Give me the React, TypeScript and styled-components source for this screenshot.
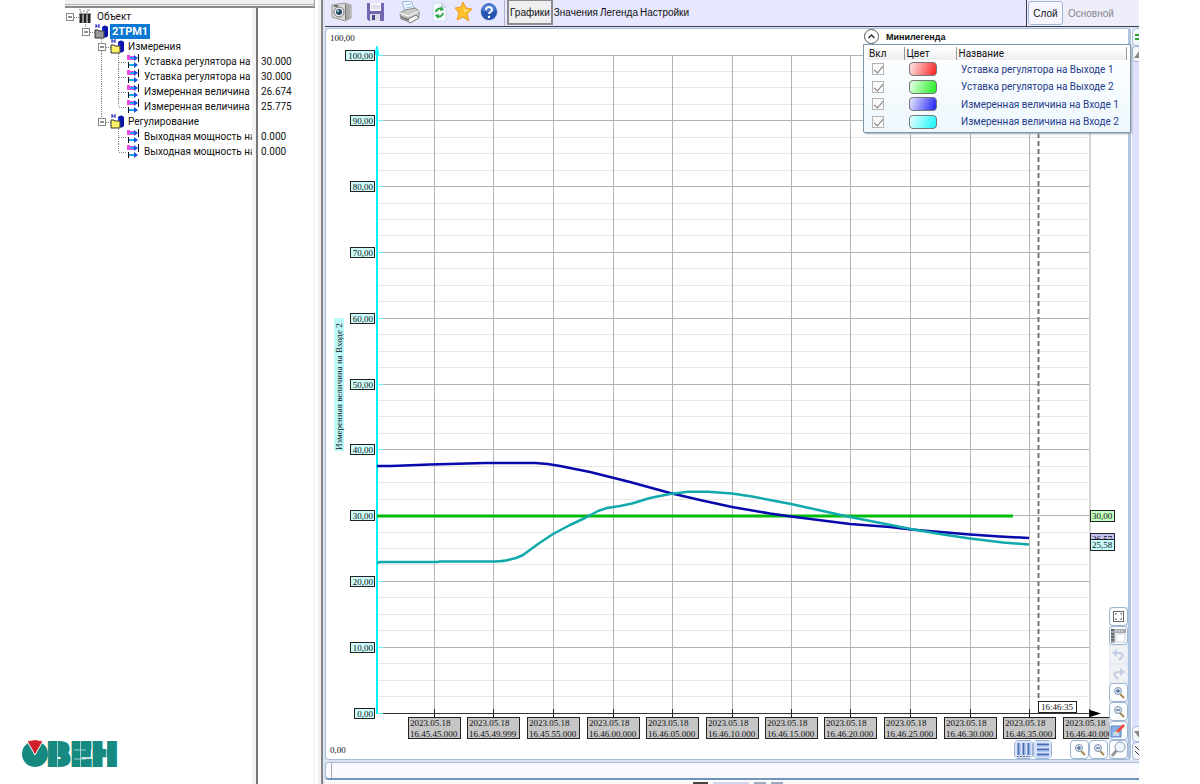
import React from "react";
import styled, { createGlobalStyle } from "styled-components";

const GlobalStyle = createGlobalStyle`
  * { box-sizing: border-box; }
  body { margin: 0; background: #fff; }
  button, input { font: inherit; margin: 0; padding: 0; }
`;

const serif = '"Liberation Serif", "Times New Roman", serif';

/* ---------- page frame ---------- */

const Page = styled.div`
  display: flex;
  height: 100vh;
  padding-right: 61px;
  overflow: hidden;
  background: #fff;
  color: #111;
  font-family: "Liberation Sans", Arial, sans-serif;
  font-size: 10px;
`;

const LeftPane = styled.aside`
  display: flex;
  flex-direction: column;
  flex: none;
  width: 318px;
`;

const TopRail = styled.div`
  flex: none;
  height: 8px;
  margin: 0 3px 0 65px;
  background: #f0f0f0;
  border-bottom: 2px solid #8c8c8c;
  border-right: 1px solid #a0a0a0;
  &::before {
    content: "";
    display: block;
    height: 4px;
    border-bottom: 1px solid #b4b4b4;
  }
`;

const LeftBody = styled.div`
  display: flex;
  flex: 1;
  min-height: 0;
`;

const TreeColumn = styled.div`
  display: flex;
  flex-direction: column;
  justify-content: space-between;
  width: 252px;
  overflow: hidden;
`;

const List = styled.ul<{ $inset: number }>`
  list-style: none;
  margin: 0;
  padding: 1px 0 0 ${(p) => p.$inset}px;
  font-family: Roboto, "Segoe UI", sans-serif;
  font-size: 10px;
  line-height: 15px;
`;

const TreeRow = styled.li`
  display: flex;
  height: 15px;
  white-space: nowrap;
  svg { flex: none; overflow: visible; }
`;

const NodeLabel = styled.span<{ $selected?: boolean }>`
  padding: 0 2px;
  background: ${(p) => (p.$selected ? "#0b78d4" : "transparent")};
  color: ${(p) => (p.$selected ? "#fff" : "#111")};
  font-weight: ${(p) => (p.$selected ? 700 : 400)};
  font-size: ${(p) => (p.$selected ? 11 : 10)}px;
`;

const Splitter = styled.div`
  flex: none;
  width: 6px;
  background: #f3f3f3;
  border-right: 2px solid #777;
`;

const ValueColumn = styled.div`
  flex: 1;
  margin-right: 3px;
  padding-top: 45px;
  border-right: 1px solid #efefef;
`;

const ValueRow = styled.li`
  height: 15px;
`;

const Logo = styled.svg`
  display: block;
  margin: 0 0 12px 20px;
`;

/* ---------- right side ---------- */

const Workspace = styled.main`
  display: flex;
  flex-direction: column;
  flex: 1;
  min-width: 0;
  border-left: 3px solid #f1f1f1;
  box-shadow: inset 2px 0 0 #858585;
  padding-left: 4px;
  background: #dbe4f2;
`;

const Toolbar = styled.header`
  display: flex;
  flex: none;
  height: 27px;
  background: #e7e7fe;
  border-bottom: 1px solid #3c3c4c;
`;

const IconGroup = styled.div`
  display: flex;
  align-items: flex-start;
  flex: none;
  width: 180px;
  border-right: 1px solid #b0b0c8;
  padding: 1px 0 0 5px;
`;

const IconButton = styled.button<{ $w: number }>`
  width: ${(p) => p.$w}px;
  height: 22px;
  border: 0;
  background: none;
  text-align: left;
  svg { display: block; }
`;

const Tabs = styled.nav`
  display: flex;
  flex: 1;
  padding-left: 2px;
`;

const Tab = styled.button<{ $active?: boolean }>`
  height: ${(p) => (p.$active ? 25 : 24)}px;
  border: ${(p) => (p.$active ? "2px solid #8c8c90" : "0")};
  border-top-width: ${(p) => (p.$active ? 1 : 0)}px;
  background: ${(p) => (p.$active ? "#efeff2" : "none")};
  padding: 0 1px;
  color: #111;
`;

const LayerBar = styled.div`
  display: flex;
  align-items: center;
  gap: 5px;
  width: 113px;
  height: 26px;
  padding-left: 1px;
  border-left: 1px solid #3c3c4c;
  background: #eeeefa;
  color: #85858f;
`;

const LayerButton = styled.button`
  width: 35px;
  height: 24px;
  border: 1px solid #9fb7dc;
  border-radius: 3px;
  background: #f6f6ff;
  color: #111;
`;

const ChartRow = styled.div`
  display: flex;
  flex: 1;
  min-height: 0;
  padding-top: 1px;
`;

const ChartPanel = styled.section`
  position: relative;
  flex: 1;
  min-width: 0;
  background: #fff;
  border: 1px solid #a4bcd8;
  border-right: 3px solid #b0c4de;
  border-radius: 4px;
`;

const Plot = styled.svg`
  display: block;
  width: 100%;
  height: auto;
  text { font-family: ${serif}; font-size: 9px; fill: #111; }
`;

const SideRail = styled.div`
  display: flex;
  flex-direction: column;
  flex: none;
  width: 8px;
  overflow: hidden;
  background: #e0e0ff;
  border-left: 1px solid #fff;
`;

const RailPiece = styled.button<{ $h: number }>`
  flex: none;
  width: 20px;
  height: ${(p) => p.$h}px;
  border: 1px solid #a4bcd8;
  border-radius: 4px;
  background: #f4f6fa;
  text-align: left;
  svg { display: block; }
`;

const RailFill = styled.div`
  flex: 1;
`;

const Timeline = styled.div`
  flex: none;
  height: 18px;
  margin-top: 2px;
  border: 1px solid #a4bcd8;
  border-bottom: 2px solid #6f95bf;
  border-right: 0;
  border-radius: 4px 0 0 4px;
  background: #f9f9ff;
  padding-left: 5px;
  &::before {
    content: "";
    display: block;
    width: 1px;
    height: 15px;
    background: #aaa;
  }
`;

const BottomRail = styled.div`
  display: flex;
  align-items: flex-end;
  gap: 5px;
  flex: none;
  height: 4px;
  padding-left: 368px;
  background: #fbfbfe;
`;

const RailMark = styled.i<{ $w: number; $c: string }>`
  width: ${(p) => p.$w}px;
  height: 2px;
  background: ${(p) => p.$c};
`;

/* ---------- mini legend ---------- */

const Legend = styled.div`
  position: absolute;
  top: 0;
  right: -3px;
  width: 268px;
`;

const LegendTitle = styled.div`
  display: flex;
  align-items: center;
  gap: 6px;
  height: 15px;
  background: #fff;
  border-right: 3px solid #b0c4de;
  font-size: 9px;
  font-weight: 700;
  button { width: 17px; height: 15px; border: 0; background: none; }
  svg { display: block; }
`;

const LegendBody = styled.div`
  height: 89px;
  padding: 2px 3px;
  border: 1px solid #7f97b4;
  border-radius: 0 0 2px 2px;
  background: linear-gradient(#fff, #eef8fe);
  box-shadow: 1px 1px 2px #9aa;
`;

const LegendTable = styled.table`
  width: 100%;
  border-collapse: collapse;
  table-layout: fixed;
  font-family: Roboto, "Segoe UI", sans-serif;
  th, td { padding: 0; text-align: left; font-weight: 400; }
  th {
    height: 13px;
    padding-left: 2px;
    background: linear-gradient(#fff, #ededf0);
    border-right: 1px solid #999;
    line-height: 12px;
  }
  td { height: 18px; color: #1f3a8a; vertical-align: middle; }
  tr:nth-child(even) td { height: 17px; }
`;

const NameCell = styled.td`
  && { padding-left: 5px; white-space: nowrap; }
`;

const Check = styled.input`
  appearance: none;
  display: block;
  position: relative;
  width: 12px;
  height: 12px;
  && { margin-left: 5px; }
  border: 1px solid #b4b4b4;
  background: #fafafa;
  &:checked::after {
    content: "";
    position: absolute;
    left: 3px;
    top: 0;
    width: 4px;
    height: 8px;
    border: solid #777;
    border-width: 0 1px 1px 0;
    transform: rotate(40deg);
  }
`;

const Swatch = styled.span<{ $from: string; $to: string }>`
  display: block;
  width: 28px;
  height: 14px;
  margin-left: 5px;
  border: 1px solid #777;
  border-radius: 4px;
  background: linear-gradient(110deg, ${(p) => p.$from}, ${(p) => p.$to});
`;

/* ---------- chart tools ---------- */

const ToolColumn = styled.div`
  position: absolute;
  right: 0;
  bottom: 0;
  display: flex;
  flex-direction: column;
  background: #dfe8f2;
`;

const BottomTools = styled.div`
  position: absolute;
  right: 20px;
  bottom: 0;
  display: flex;
  align-items: flex-end;
`;

const Tool = styled.button<{ $plain?: boolean; $gap?: number }>`
  display: grid;
  place-items: center;
  width: 19px;
  height: 19px;
  margin-right: ${(p) => p.$gap ?? 0}px;
  border: 1px solid ${(p) => (p.$plain ? "#e8ecf2" : "#9db4d2")};
  border-radius: 4px;
  background: ${(p) => (p.$plain ? "#eff1f5" : "#fcfdff")};
`;

/* ---------- drawings ---------- */

const CameraIcon = () => (
  <svg width="23" height="22" viewBox="0 0 23 22">
    <path d="M2 4 15 2l6 2v13l-6 3-13-4z" fill="#d8d8d8" stroke="#999" />
    <path d="M15 3v16l5-3V5z" fill="#777" />
    <path d="M17 4v13M19 5v11" stroke="#ddd" />
    <circle cx="9" cy="11" r="5" fill="#eef" stroke="#777" />
    <circle cx="9" cy="11" r="3" fill="#23495c" />
    <circle cx="8" cy="10" r="1" fill="#bfe3ee" />
    <path d="M4 5h4" stroke="#777" strokeWidth="2" />
  </svg>
);
const SaveIcon = () => (
  <svg width="20" height="22" viewBox="0 0 20 22">
    <path d="M1 2h17v18H3l-2-2z" fill="#7467b4" />
    <path d="M4 2h11v8H4z" fill="#f5f5fb" />
    <path d="M5 5h9M5 7h9" stroke="#c8c8dc" />
    <path d="M4 13h10v7H4z" fill="#dcdce8" />
    <path d="M6 14h3v5H6z" fill="#4d4389" />
  </svg>
);
const PrinterIcon = () => (
  <svg width="22" height="23" viewBox="0 0 22 23">
    <path d="M3 1 12 0l4 9-9 3z" fill="#f4faff" stroke="#8db4dc" />
    <path d="M6 4l6-1M7 7l6-1" stroke="#9cc2e8" />
    <path d="M1 12 6 9l10-2 4 3v6l-9 5-9-3z" fill="#c9c9c9" stroke="#888" />
    <path d="m1 12 9 3 10-5" fill="none" stroke="#fff" />
    <path d="m7 19 10-5 3 3-9 5z" fill="#f5f5f5" stroke="#777" />
    <path d="m2 15 8 3v2l-8-3z" fill="#777" />
  </svg>
);
const RefreshPageIcon = () => (
  <svg width="16" height="22" viewBox="0 0 16 22">
    <path d="M1 2h9l4 4v14H1z" fill="#f5f9ff" stroke="#cfdcec" />
    <path d="M10 2v4h4" fill="#dce6f2" stroke="#b6c6da" />
    <path d="M4 11a4 4 0 0 1 6-3M11 12a4 4 0 0 1-6 3" fill="none" stroke="#2aa83c" strokeWidth="2" />
    <path d="m9 5 3 4-4 1zM6 18l-3-4 4-1z" fill="#2aa83c" />
  </svg>
);
const StarIcon = () => (
  <svg width="20" height="22" viewBox="0 0 20 22">
    <path d="m9 1 3 6 6 1-5 5 2 7-6-4-6 3 2-7-4-5 6-1z" fill="#ffc02e" stroke="#f09a20" />
    <path d="m9 3 1 5 5 1-5 2z" fill="#ffe48a" />
  </svg>
);
const HelpIcon = () => (
  <svg width="20" height="22" viewBox="0 0 20 22">
    <circle cx="9" cy="11" r="9" fill="#c9d3e8" />
    <circle cx="9" cy="11" r="8" fill="#2653b0" />
    <path d="M2 9a7 7 0 0 1 14 0c-4 3-10 3-14 0z" fill="#4a78cc" />
    <path d="M6 9c0-4 6-4 6 0 0 2-3 2-3 4" fill="none" stroke="#fff" strokeWidth="2" />
    <circle cx="9" cy="16" r="1.2" fill="#fff" />
  </svg>
);

const FolderGlyph = ({ x, gray }: { x: number; gray?: boolean }) => (
  <g transform={`translate(${x} 0)`}>
    <path d="M7 3q3-3 6 0v9q-3 3-6 0z" fill="#0a14a8" />
    <path d="M7 3q3 2 3 10-3 0-3-1z" fill="#2136e6" />
    <path d="M0 6h3l1 1h5v7H0z" fill={gray ? "#9a9a9a" : "#fff36a"} stroke="#333" strokeWidth="1" />
    <path d="M1 0v4M4 0v4M1 2h3" stroke="#1a1ab8" />
  </g>
);
const ParamGlyph = ({ x }: { x: number }) => (
  <g transform={`translate(${x} 0)`}>
    <path d="M0 1h3v5H0z" fill="#f04be0" />
    <path d="M1 2h6v4H1z" fill="#f04be0" />
    <path d="M3 4h6" stroke="#1aa7f0" strokeWidth="2" />
    <path d="m7 1 4 3-4 3z" fill="#1a50e0" />
    <path d="M11.500 0v8M1.500 8v6" stroke="#111" />
    <path d="M2 11h7" stroke="#1aa7f0" strokeWidth="2" />
    <path d="m7 8 4 3-4 3z" fill="#1a50e0" />
  </g>
);
const RootGlyph = ({ x }: { x: number }) => (
  <g transform={`translate(${x} 0)`}>
    <path d="M0 5h12" stroke="#444" />
    <path d="M2 5v9M6 5v9M10 5v9" stroke="#222" strokeWidth="3" />
    <path d="M0 1h2M4 2h2M8 1h3M1 3h2M7 3h2" stroke="#888" />
  </g>
);
const Toggle = ({ x }: { x: number }) => (
  <g>
    <rect x={x + 0.5} y="4.500" width="7" height="7" fill="#fff" stroke="#888" />
    <path d={`M${x + 2} 8h4`} stroke="#222" />
  </g>
);
const dots = { stroke: "#888", strokeDasharray: "1 1", fill: "none" };

type Kind = "root" | "device" | "folder" | "param";
const tree: { kind: Kind; text: string; last?: boolean }[] = [
  { kind: "root", text: "Объект" },
  { kind: "device", text: "2ТРМ1" },
  { kind: "folder", text: "Измерения" },
  { kind: "param", text: "Уставка регулятора на" },
  { kind: "param", text: "Уставка регулятора на" },
  { kind: "param", text: "Измеренная величина" },
  { kind: "param", text: "Измеренная величина", last: true },
  { kind: "folder", text: "Регулирование", last: true },
  { kind: "param", text: "Выходная мощность на" },
  { kind: "param", text: "Выходная мощность на", last: true },
];

const TreeArt = ({ kind, last, inner }: { kind: Kind; last?: boolean; inner: boolean }) => {
  if (kind === "root")
    return (
      <svg width="30" height="15">
        <path d="M9 8.500h5" {...dots} />
        <Toggle x={1} />
        <RootGlyph x={14} />
      </svg>
    );
  if (kind === "device")
    return (
      <svg width="45" height="15">
        <path d="M20.500 0v4M25 8.500h5" {...dots} />
        <Toggle x={17} />
        <FolderGlyph x={30} gray />
      </svg>
    );
  if (kind === "folder")
    return (
      <svg width="61" height="15">
        <path d={`M36.500 0v${last ? 4 : 15}M41 8.500h5`} {...dots} />
        <Toggle x={33} />
        <FolderGlyph x={46} />
      </svg>
    );
  return (
    <svg width="77" height="15">
      <path d={`M53.500 0v${last ? 8 : 15}M54 8.500h8${inner ? "M36.500 0v15" : ""}`} {...dots} />
      <ParamGlyph x={62} />
    </svg>
  );
};

const values = ["30.000", "30.000", "26.674", "25.775", "", "0.000", "0.000"];

const legendRows = [
  ["Уставка регулятора на Выходе 1", "#ffe9e9", "#f92020"],
  ["Уставка регулятора на Выходе 2", "#e9ffe9", "#20ee20"],
  ["Измеренная величина на Входе 1", "#e9e9ff", "#2020f4"],
  ["Измеренная величина на Входе 2", "#e9ffff", "#12f4fa"],
];

const times = ["45.45.000", "45.49.999", "45.55.000", "46.00.000", "46.05.000", "46.10.000",
  "46.15.000", "46.20.000", "46.25.000", "46.30.000", "46.35.000", "46.40.000"];
const timeX = [434, 493, 553, 613, 672, 732, 791, 850, 910, 970, 1029, 1089];
const levelY = (v: number) => Math.floor(713 - v * 6.58);

/* Axes, grid and the three visible series */
const Chart = () => (
  <Plot viewBox="326 29 802 732" role="img" aria-label="График измеренных величин">
    <g shapeRendering="crispEdges">
      {Array.from({ length: 40 }, (_, i) => (i + 1) * 2.5).map((v) => (
        <path key={v} d={`M378 ${levelY(v) + 0.5}H1090`} stroke={v % 10 ? "#e7e7e7" : "#b2b2b2"} />
      ))}
      {timeX.map((x, i) => (
        <path key={x} d={`M${x + 0.5} 55V713`} stroke={i === 11 ? "#d6d6d6" : "#b4b4b4"} strokeWidth={i === 11 ? 2 : 1} />
      ))}
      {timeX.map((x) => (
        <path key={x} d={`M${x + 0.5} 709V717`} stroke="#222" />
      ))}
      <path d="M381 713.500H1092" stroke="#333" />
      <path d="M377 50V714" stroke="#00f4fa" strokeWidth="2" />
      {Array.from({ length: 11 }, (_, i) => (
        <path key={i} d={`M378 ${levelY(i * 10) + 0.5}h5`} stroke="#5ff8fa" />
      ))}
    </g>
    <path d="M375 55l2-9 2 9" fill="none" stroke="#00f4fa" />
    <path d="M1090 710l11 3.500-11 3.500z" fill="#000" />
    <path d="M1038.500 133V702" stroke="#777" strokeWidth="2" strokeDasharray="5 3" />
    <g fill="none" strokeLinejoin="round">
      <path d="M377 516H1013" stroke="#00bb0a" strokeWidth="3" />
      <path
        d="M377 466H391L430 464.500 485 463H535Q548 463.500 560 466T590 472L630 482 670 493 700 500 732 507 770 513.500 791 516.500 850 524 890 527 911 529.500 970 534.500 1000 536.500 1029 538"
        stroke="#0808ac" strokeWidth="2.500"
      />
      <path
        d="M377 563 380 562H437L440 561.500H495Q505 561 508 560L516 558 523 555 538 544 553 534 570 525 585 518 598 511 607 508 620 506 632 503.500 650 498 670 494 688 491.700H708L732 493.500 752 496.500 770 500 791 504 850 517 911 529 940 534 970 538.500 1003 542.500 1029 544.500"
        stroke="#12a9ac" strokeWidth="2.500"
      />
    </g>
    {Array.from({ length: 11 }, (_, i) => {
      const y = levelY(i * 10);
      const w = i === 10 ? 29 : i === 0 ? 20 : 24;
      return (
        <g key={i}>
          <rect x={374.5 - w} y={y - 4.5} width={w} height="10" fill="#cdfbfb" stroke="#222" />
          <text x="373" y={y + 4} textAnchor="end">{i * 10},00</text>
        </g>
      );
    })}
    <text x="330" y="41">100,00</text>
    <text x="330" y="753">0,00</text>
    <rect x="334" y="318" width="10" height="133" fill="#bdf9f9" />
    <text transform="translate(342 450) rotate(-90)">Измеренная величина на Входе 2</text>
    {timeX.map((x, i) => (
      <g key={x}>
        <rect x={x - 25.5} y="717.500" width="52" height="21" fill="#c6c6c6" stroke="#222" />
        <text x={x - 24} y="726">2023.05.18</text>
        <text x={x - 24} y="737">16.{times[i]}</text>
      </g>
    ))}
    <rect x="1038.500" y="701.500" width="38" height="11" fill="#fff" stroke="#222" />
    <text x="1041" y="710">16:46:35</text>
    {[["30,00", 510, "#c4fdc0"], ["26,57", 533, "#c3c3f2"], ["25,58", 539, "#c8fdfd"]].map(([t, y, c]) => (
      <g key={t}>
        <rect x="1090.500" y={Number(y) + 0.5} width="24" height="11" fill={String(c)} stroke="#222" />
        <text x="1092" y={Number(y) + 9}>{t}</text>
      </g>
    ))}
  </Plot>
);

const Lens = ({ sign, big }: { sign?: "+" | "-"; big?: boolean }) =>
  big ? (
    <svg width="17" height="17">
      <path d="m7 9-5 6" stroke="#999" strokeWidth="3" />
      <circle cx="10" cy="6" r="5" fill="#eef6fd" stroke="#8d99a8" />
    </svg>
  ) : (
    <svg width="13" height="13">
      <path d="m8 8 4 4" stroke="#a88a50" strokeWidth="2" />
      <circle cx="6" cy="5" r="3.500" fill="#dbe9f8" stroke="#8494aa" />
      <path d={sign === "+" ? "M4 5h4M6 3v4" : "M4 5h4"} stroke="#37507c" />
    </svg>
  );
const ArrowIcon = ({ flip }: { flip?: boolean }) => (
  <svg width="15" height="15">
    <g transform={flip ? "translate(15 0) scale(-1 1)" : undefined}>
      <path d="M4 6h5q4 1 2 4l-3 3" fill="none" stroke="#c3cfe2" strokeWidth="2" />
      <path d="M1 6l5-4v8z" fill="#c3cfe2" />
    </g>
  </svg>
);
const FitIcon = () => (
  <svg width="13" height="13">
    <rect x="1.500" y="1.500" width="10" height="10" fill="#fff" stroke="#666" />
    <path d="M3.500 5V3.500H5M8 3.500h1.500V5M9.500 8v1.500H8M5 9.500H3.500V8" fill="none" stroke="#888" />
  </svg>
);
const AxesIcon = () => (
  <svg width="17" height="17">
    <path d="M1 2h15v4H5v10H1z" fill="#a3a7af" />
    <path d="M1 3h3M1 7h3M1 10h3M1 13h3" stroke="#222" />
    <path d="M6 7h9v8H6z" fill="#fff" stroke="#ccd" />
    <path d="M6 3v2M9 3v2M12 3v2" stroke="#eee" />
  </svg>
);
const EditIcon = () => (
  <svg width="17" height="17">
    <path d="M1 4h10v11H1z" fill="#86b0e8" stroke="#5d86c4" />
    <path d="M3 11h6M3 13h6" stroke="#fff" />
    <path d="M6 9 13 2l2 2-7 7z" fill="#ee4a35" />
    <path d="m6 9-1 3 3-1z" fill="#f8d8a0" />
  </svg>
);
const ColumnsIcon = ({ rows }: { rows?: boolean }) => (
  <svg width="17" height="17">
    <g transform={rows ? "rotate(90 8.500 8.500)" : undefined}>
      <rect x="0" y="0" width="17" height="17" fill="#d5e2fa" />
      <path d="M3.500 2v12M8.500 2v12M13.500 2v12" stroke="#4c6db4" strokeWidth="2" />
      <path d="M5 2v12M10 2v12M15 2v12" stroke="#96b2e4" />
      {!rows && <path d="M2 15.500h13" stroke="#667" strokeDasharray="2 1" />}
    </g>
  </svg>
);

const toolbarIcons: [string, number, React.ReactElement][] = [
  ["Снимок", 36, <CameraIcon />],
  ["Сохранить", 33, <SaveIcon />],
  ["Печать", 33, <PrinterIcon />],
  ["Обновить", 22, <RefreshPageIcon />],
  ["Избранное", 26, <StarIcon />],
  ["Справка", 22, <HelpIcon />],
];

export default function App() {
  return (
    <>
      <GlobalStyle />
      <Page>
        <LeftPane>
          <TopRail />
          <LeftBody>
            <TreeColumn>
              <List $inset={65}>
                {tree.map((n, i) => (
                  <TreeRow key={i}>
                    <TreeArt kind={n.kind} last={n.last} inner={i < 7} />
                    <NodeLabel $selected={n.kind === "device"}>{n.text}</NodeLabel>
                  </TreeRow>
                ))}
              </List>
              <Logo width="100" height="32" viewBox="0 0 100 32" role="img" aria-label="ОВЕН">
                <circle cx="15" cy="14" r="13" fill="#168a80" />
                <path d="M15 15 7 1Q15-2 23 1z" fill="#d0202c" stroke="#fff" strokeWidth="1" />
                <text x="27" y="25" fontFamily="DejaVu Sans" fontWeight="700" fontSize="31" fill="#168a80" stroke="#168a80" strokeWidth="4">ВЕН</text>
                <path d="M37.500 1v27M60.500 1v27M86.500 1v27M54 10h12M54 19h12" stroke="#fff" strokeWidth="1" opacity=".6" />
              </Logo>
            </TreeColumn>
            <Splitter />
            <ValueColumn>
              <List $inset={3}>
                {values.map((v, i) => (
                  <ValueRow key={i}>{v}</ValueRow>
                ))}
              </List>
            </ValueColumn>
          </LeftBody>
        </LeftPane>

        <Workspace>
          <Toolbar>
            <IconGroup>
              {toolbarIcons.map(([label, w, icon]) => (
                <IconButton key={label} $w={w} aria-label={label}>{icon}</IconButton>
              ))}
            </IconGroup>
            <Tabs>
              <Tab $active>Графики</Tab>
              <Tab>Значения</Tab>
              <Tab>Легенда</Tab>
              <Tab>Настройки</Tab>
            </Tabs>
            <LayerBar>
              <LayerButton>Слой</LayerButton>
              <span>Основной</span>
            </LayerBar>
          </Toolbar>

          <ChartRow>
            <ChartPanel>
              <Chart />
              <Legend>
                <LegendTitle>
                  <button aria-label="Свернуть">
                    <svg width="17" height="15">
                      <circle cx="8.500" cy="7.500" r="7" fill="#fff" stroke="#555" />
                      <path d="m5.500 9 3-3 3 3" fill="none" stroke="#333" strokeWidth="1.500" />
                    </svg>
                  </button>
                  Минилегенда
                </LegendTitle>
                <LegendBody>
                  <LegendTable>
                    <colgroup>
                      <col width="37" />
                      <col width="52" />
                      <col />
                    </colgroup>
                    <thead>
                      <tr><th>Вкл</th><th>Цвет</th><th>Название</th></tr>
                    </thead>
                    <tbody>
                      {legendRows.map(([name, from, to]) => (
                        <tr key={name}>
                          <td><Check type="checkbox" defaultChecked aria-label={name} /></td>
                          <td><Swatch $from={from} $to={to} /></td>
                          <NameCell>{name}</NameCell>
                        </tr>
                      ))}
                    </tbody>
                  </LegendTable>
                </LegendBody>
              </Legend>
              <BottomTools>
                <Tool aria-label="Столбцы"><ColumnsIcon /></Tool>
                <Tool aria-label="Строки" $gap={18}><ColumnsIcon rows /></Tool>
                <Tool aria-label="Увеличить по времени"><Lens sign="+" /></Tool>
                <Tool aria-label="Уменьшить по времени"><Lens sign="-" /></Tool>
              </BottomTools>
              <ToolColumn>
                <Tool aria-label="Показать всё"><FitIcon /></Tool>
                <Tool aria-label="Оси"><AxesIcon /></Tool>
                <Tool aria-label="Назад" $plain><ArrowIcon /></Tool>
                <Tool aria-label="Вперёд" $plain><ArrowIcon flip /></Tool>
                <Tool aria-label="Увеличить"><Lens sign="+" /></Tool>
                <Tool aria-label="Уменьшить"><Lens sign="-" /></Tool>
                <Tool aria-label="Правка"><EditIcon /></Tool>
                <Tool aria-label="Масштаб"><Lens big /></Tool>
              </ToolColumn>
            </ChartPanel>
            <SideRail>
              <RailPiece $h={18} aria-label="Обновить шкалу">
                <svg width="16" height="14"><path d="M2 5h6M2 9h6" stroke="#2aa83c" strokeWidth="2" /></svg>
              </RailPiece>
              <RailPiece $h={16} aria-label="Вверх">
                <svg width="16" height="13"><path d="m1 10 6-8 6 8z" fill="#888" /></svg>
              </RailPiece>
              <RailFill />
              <RailPiece $h={16} aria-label="Вниз">
                <svg width="16" height="13"><path d="m1 3 6 8 6-8z" fill="#888" /></svg>
              </RailPiece>
              <RailPiece $h={18} aria-label="Развернуть">
                <svg width="16" height="14"><path d="m2 2 4 4 4-4M2 7l4 4 4-4" fill="none" stroke="#333" /></svg>
              </RailPiece>
            </SideRail>
          </ChartRow>
          <Timeline />
          <BottomRail>
            <RailMark $w={15} $c="#444" />
            <RailMark $w={36} $c="#d4d4ee" />
            <RailMark $w={12} $c="#9aa8c0" />
            <RailMark $w={12} $c="#9aa8c0" />
          </BottomRail>
        </Workspace>
      </Page>
    </>
  );
}
